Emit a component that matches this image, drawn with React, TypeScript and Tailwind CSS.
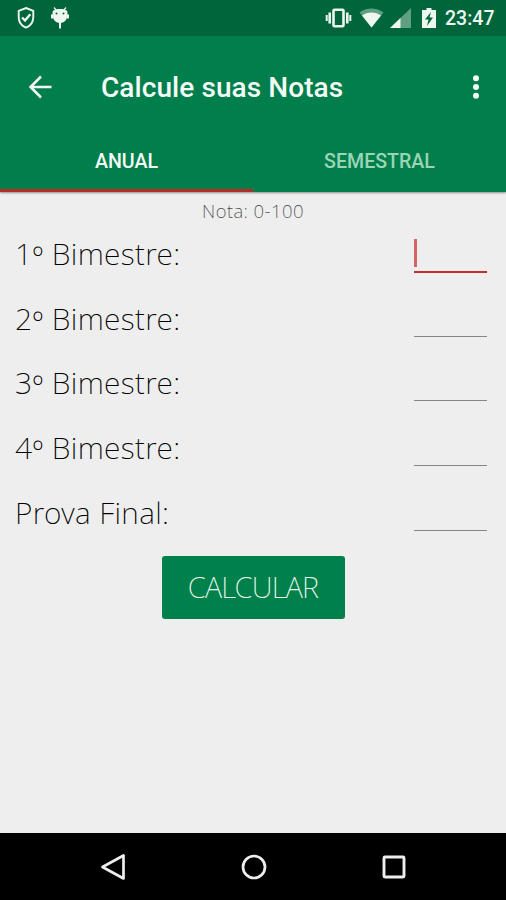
const LABEL_FONT = "font-['Noto_Sans','Open_Sans',sans-serif] font-extralight";

function StatusBar() {
  return (
    <div className="flex h-9 items-center bg-[#00653a] pl-[17px] pr-[11px] text-[#edf7f0]">
      <svg width="18" height="24" viewBox="0 0 18 24" fill="none" stroke="currentColor">
        <path d="M9 2 16.3 4.8V11c0 5.2-2.8 8.8-7.3 10.7C4.5 19.8 1.700 16.200 1.700 11V4.800z" strokeWidth="1.900" />
        <path d="m5 11.500 3 3 5.300-6.300" strokeWidth="2.400" />
      </svg>
      <svg className="ml-[16px]" width="18" height="24" viewBox="0 0 18 24" fill="currentColor">
        <path d="M1.800 5C3.500 3.600 6 3 9 3s5.500.6 7.200 2c1.300 6-1.200 12-7.200 12S.5 11 1.800 5z" />
        <path d="m3 1.500 2.500 3M15 1.500l-2.500 3" stroke="currentColor" strokeWidth="1.200" />
        <path d="M1 8.500v4M17 8.500v4M9 16v6.500" stroke="currentColor" strokeWidth="2" />
        <circle cx="5.500" cy="7.500" r="1" fill="#00653a" />
        <circle cx="12.500" cy="7.500" r="1" fill="#00653a" />
      </svg>
      <svg className="ml-auto" width="27" height="22" viewBox="0 0 27 22" fill="none" stroke="currentColor">
        <rect x="8.500" y="2.700" width="10" height="16.600" rx="1" strokeWidth="2.600" />
        <path d="M4.700 5.500v11M22.300 5.500v11" strokeWidth="2.600" />
        <path d="M1.700 8v6M25.300 8v6" strokeWidth="2" />
      </svg>
      <svg className="ml-[7px]" width="25" height="20" viewBox="0 0 25 20" fill="currentColor">
        <path d="M.5 4.500C7.500-.8 17.500-.8 24.500 4.500L12.500 19.500z" opacity=".4" />
        <path d="M3 7.500c5.500-4 13.500-4 19 0l-9.500 12z" />
      </svg>
      <svg className="ml-[6px]" width="21" height="20" viewBox="0 0 21 20" fill="currentColor">
        <path d="M21 0v20H0z" opacity=".4" />
        <path d="M10.500 10v10H0z" />
      </svg>
      <svg className="ml-[11px]" width="14" height="21" viewBox="0 0 14 21" fill="currentColor">
        <path d="M4.500 0h5v2H14v18H0V2h4.500z" />
        <path d="M9 4 3 11.500h3.500L5 18l6-8.500H7.500z" fill="#00653a" />
      </svg>
      <span className="ml-[9px] mt-[2px] w-[50px] whitespace-nowrap text-[19.5px] font-medium leading-none">23:47</span>
    </div>
  );
}

function AppBar() {
  return (
    <div className="flex h-[101px] items-center pl-[28px] pr-[26px] text-[#f4fbf6]">
      <svg width="24" height="24" viewBox="0 0 24 24" fill="none" stroke="currentColor" strokeWidth="2.500">
        <path d="M23.500 12H2.500M13 1.500 2.500 12 13 22.500" />
      </svg>
      <h1 className="ml-[49px] mt-[3px] whitespace-nowrap text-[28px] font-medium leading-none tracking-[0.08px]">Calcule suas Notas</h1>
      <svg className="ml-auto" width="8" height="24" viewBox="0 0 8 24" fill="currentColor">
        <circle cx="4" cy="3.200" r="3" />
        <circle cx="4" cy="12" r="3" />
        <circle cx="4" cy="20.800" r="3" />
      </svg>
    </div>
  );
}

function Tabs() {
  return (
    <div className="grid h-[55px] grid-cols-2 text-center text-[19.6px] font-medium leading-[46px]">
      <button className="border-b-[3px] border-[#b92b27] pb-[3px] text-[#f4fbf6]">ANUAL</button>
      <button className="pb-[6px] text-[#9bd5b5]">SEMESTRAL</button>
    </div>
  );
}

const rows = [
  { ordinal: "1", name: "Bimestre:" },
  { ordinal: "2", name: "Bimestre:" },
  { ordinal: "3", name: "Bimestre:" },
  { ordinal: "4", name: "Bimestre:" },
  { ordinal: "", name: "Prova Final:" },
];

export default function App() {
  return (
    <div className="flex h-[900px] w-[506px] flex-col overflow-hidden bg-[#eeeeee] font-['Roboto',sans-serif]">
      <StatusBar />
      <header className="z-10 bg-[#007e4c] shadow-[0_1px_2px_rgba(0,0,0,0.4)]">
        <AppBar />
        <Tabs />
      </header>
      <main className="flex flex-1 flex-col">
        <p className={`${LABEL_FONT} mt-[7px] h-[22px] text-center text-[18.5px] leading-[24px] tracking-[0.45px] text-[#444]`}>Nota: 0-100</p>
        {rows.map(({ ordinal, name }, i) => (
          <div key={i} className="flex h-[64.7px] items-center justify-between pl-[15px] pr-[19px]">
            <label className={`${LABEL_FONT} mt-px whitespace-nowrap text-[30px] leading-none tracking-[0.37px] text-black`}>
              {ordinal && (
                <>
                  {ordinal}
                  <span className="relative top-[3px]">º</span>{" "}
                </>
              )}
              {name}
            </label>
            <div
              className={
                i === 0
                  ? "mt-[3px] h-[36px] w-[73px] border-b-2 border-[#c52c2c] pt-[2px]"
                  : "mt-px h-[36px] w-[73px] border-b border-[#858585]"
              }
            >
              {i === 0 && <div className="h-[28px] w-[3px] bg-[#d46464]" />}
            </div>
          </div>
        ))}
        <button className={`${LABEL_FONT} mt-[12px] h-[63px] w-[183px] self-center rounded-[3px] bg-[#00804b] pb-[2px] text-[29px] leading-none tracking-[-0.8px] text-[#e6f8ed]`}>
          CALCULAR
        </button>
      </main>
      <nav className="flex h-[67px] items-center bg-black pl-[100px] text-[#eee]">
        <svg width="26" height="28" viewBox="0 0 26 28" fill="none" stroke="currentColor" strokeWidth="2.700" strokeLinejoin="round">
          <path d="M23.500 2.500v23L2.500 14z" />
        </svg>
        <svg className="ml-[115px]" width="26" height="26" viewBox="0 0 26 26" fill="none" stroke="currentColor" strokeWidth="2.700">
          <circle cx="13" cy="13" r="11" />
        </svg>
        <svg className="ml-[115px]" width="24" height="24" viewBox="0 0 24 24" fill="none" stroke="currentColor" strokeWidth="2.900">
          <rect x="2" y="2" width="20" height="20" rx="1" />
        </svg>
      </nav>
    </div>
  );
}
